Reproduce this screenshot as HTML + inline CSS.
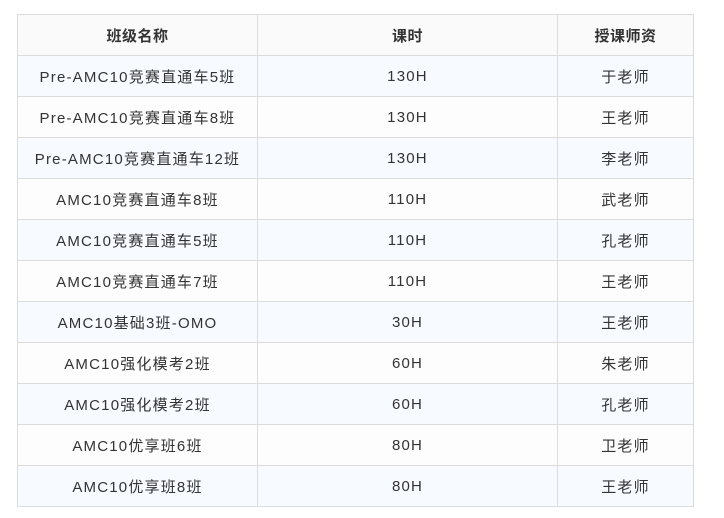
<!DOCTYPE html>
<html><head><meta charset="utf-8"><style>
body{margin:0;background:#fff;width:724px;height:518px;overflow:hidden;font-family:"Liberation Sans","Noto Sans CJK SC",sans-serif;}
table{position:absolute;left:17px;top:14px;border-collapse:collapse;}
td,th{border:1px solid #dcdcdc;height:40px;padding:0;text-align:center;font-size:15px;color:#333;letter-spacing:1.2px;}
th{font-weight:bold;background:#fafafa;letter-spacing:0.5px;}
tr:nth-child(odd) td{background:#f7faff;}
tr:nth-child(even) td{background:#fdfdfd;}
</style></head><body>
<table>
<colgroup><col style="width:240px"><col style="width:300px"><col style="width:136px"></colgroup>
<thead><tr><th>班级名称</th><th>课时</th><th>授课师资</th></tr></thead>
<tbody>
<tr><td>Pre-AMC10竞赛直通车5班</td><td>130H</td><td>于老师</td></tr>
<tr><td>Pre-AMC10竞赛直通车8班</td><td>130H</td><td>王老师</td></tr>
<tr><td>Pre-AMC10竞赛直通车12班</td><td>130H</td><td>李老师</td></tr>
<tr><td>AMC10竞赛直通车8班</td><td>110H</td><td>武老师</td></tr>
<tr><td>AMC10竞赛直通车5班</td><td>110H</td><td>孔老师</td></tr>
<tr><td>AMC10竞赛直通车7班</td><td>110H</td><td>王老师</td></tr>
<tr><td>AMC10基础3班-OMO</td><td>30H</td><td>王老师</td></tr>
<tr><td>AMC10强化模考2班</td><td>60H</td><td>朱老师</td></tr>
<tr><td>AMC10强化模考2班</td><td>60H</td><td>孔老师</td></tr>
<tr><td>AMC10优享班6班</td><td>80H</td><td>卫老师</td></tr>
<tr><td>AMC10优享班8班</td><td>80H</td><td>王老师</td></tr>
</tbody></table>
</body></html>
